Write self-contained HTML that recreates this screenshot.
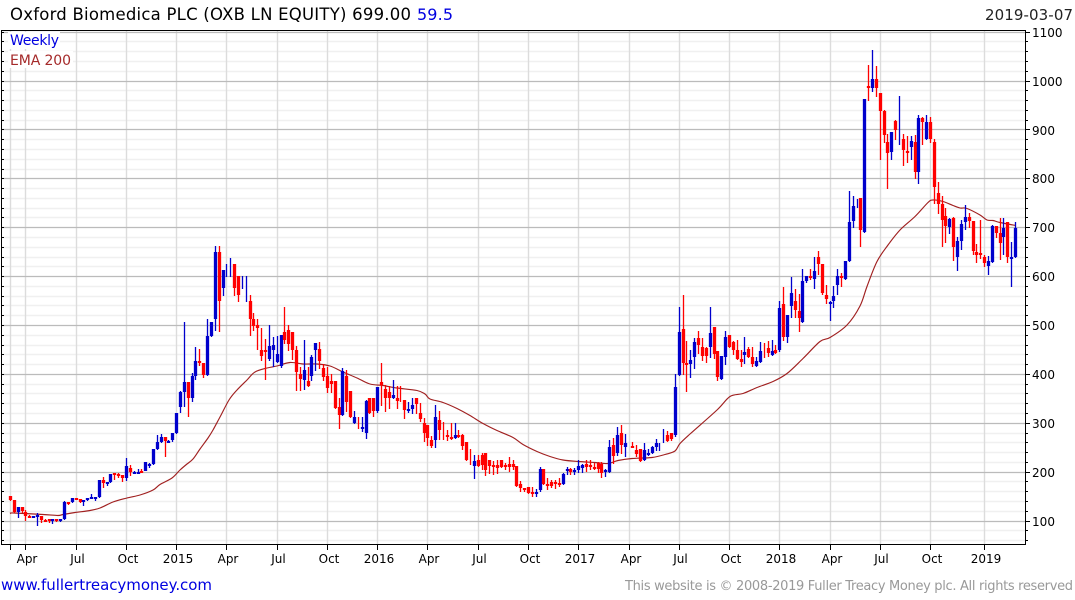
<!DOCTYPE html>
<html><head><meta charset="utf-8"><title>Oxford Biomedica PLC</title>
<style>
html,body{margin:0;padding:0;background:#fff;width:1075px;height:600px;overflow:hidden}
svg{display:block}
text{font-family:"DejaVu Sans","Liberation Sans",sans-serif}
</style></head><body>
<svg id="c" xmlns="http://www.w3.org/2000/svg" width="1075" height="600" viewBox="0 0 1075 600">
<g id="grid"></g>
<rect x="8" y="32" width="52" height="17" fill="#fff"/>
<rect x="8" y="51" width="65" height="17" fill="#fff"/>
<g id="ema"></g>
<g id="bars"></g>
<g id="frame" shape-rendering="crispEdges"></g>
<text x="10" y="20" font-size="16.5" fill="#000" textLength="401" lengthAdjust="spacing">Oxford Biomedica PLC (OXB LN EQUITY) 699.00</text>
<text x="417" y="20" font-size="16" fill="#0000e0" textLength="36" lengthAdjust="spacing">59.5</text>
<text x="985" y="20" font-size="15" fill="#222" textLength="88" lengthAdjust="spacing">2019-03-07</text>
<text x="10" y="45" font-size="14" fill="#0000e0" textLength="49" lengthAdjust="spacing">Weekly</text>
<text x="10" y="65" font-size="14" fill="#a52a2a" textLength="61" lengthAdjust="spacing">EMA 200</text>
<g font-size="12" fill="#000">
<text x="1032" y="37" textLength="30.5">1100</text><text x="1032" y="86" textLength="30.5">1000</text>
<text x="1032" y="135" textLength="23">900</text><text x="1032" y="183" textLength="23">800</text>
<text x="1032" y="232" textLength="23">700</text><text x="1032" y="281" textLength="23">600</text>
<text x="1032" y="330" textLength="23">500</text><text x="1032" y="379" textLength="23">400</text>
<text x="1032" y="428" textLength="23">300</text><text x="1032" y="477" textLength="23">200</text>
<text x="1032" y="526" textLength="23">100</text>
</g>
<g font-size="12" fill="#000" text-anchor="middle">
<text x="27" y="563">Apr</text><text x="77.5" y="563">Jul</text><text x="128" y="563">Oct</text><text x="178" y="563">2015</text>
<text x="228" y="563">Apr</text><text x="278.5" y="563">Jul</text><text x="329" y="563">Oct</text><text x="379" y="563">2016</text>
<text x="429" y="563">Apr</text><text x="479.5" y="563">Jul</text><text x="530" y="563">Oct</text><text x="580" y="563">2017</text>
<text x="631" y="563">Apr</text><text x="680.5" y="563">Jul</text><text x="731" y="563">Oct</text><text x="781" y="563">2018</text>
<text x="832" y="563">Apr</text><text x="881.5" y="563">Jul</text><text x="932" y="563">Oct</text><text x="986" y="563">2019</text>
</g>
<text x="1" y="590" font-size="15" fill="#0000e0" textLength="211" lengthAdjust="spacing">www.fullertreacymoney.com</text>
<text x="625" y="590" font-size="13" fill="#999" textLength="448" lengthAdjust="spacing">This website is © 2008-2019 Fuller Treacy Money plc. All rights reserved</text>
</svg>
<script>
(function(){
var NS="http://www.w3.org/2000/svg";
function el(p,n,a){var e=document.createElementNS(NS,n);for(var k in a)e.setAttribute(k,a[k]);document.getElementById(p).appendChild(e);return e}
function Y(v){return Math.floor(32.2+(1100-v)*.4889)+.5}
var v,y,h="",H="",t="";
for(v=60;v<=1100;v+=20){y=Y(v);var maj=v%100==0;
 if(maj){H+="M2 "+y+"H1025"}else{h+="M2 "+y+"H1025"}
 t+="M2 "+y+"H4M1026 "+y+"H"+(maj?1030:1028);}
var vs=[10,25,76,126,176,226,277,327,377,427,478,528,578,629,679,729,779,830,880,930,984],V="",B="";
vs.forEach(function(x){V+="M"+(x+.5)+" 31V544";B+="M"+(x+.5)+" 545V550"});
el("grid","path",{d:h,stroke:"#f0f0f0","stroke-width":1.4,fill:"none"});
el("grid","path",{d:V,stroke:"#dcdcdc","stroke-width":1.4,fill:"none"});
el("grid","path",{d:H,stroke:"#bbb","stroke-width":1.2,fill:"none"});
el("frame","path",{d:"M1.5 30.5H1025.5V544.5H1.5Z"+t+B,stroke:"#000","stroke-width":1,fill:"none"});
var E="10,513.5 14,513 43,514.5 58,515.5 63,514.5 75,512.5 90,510.5 100,508 113,502 127,498 140,495 153,490 160,484.5 172,478 180,470 187,464 193,459 200,449 208,438 213,430 220,417 229,400 237,390 247,380 255,372 267,368 277,366 290,362.5 303,364 317,364 330,366 343,372 357,378 370,384 383,385.5 397,388 417,390.5 425,394 430,399 443,402.5 457,408.5 470,415.5 483,423.5 497,430.5 513,437.5 523,444.5 537,451.5 550,456.5 563,460 578,461.5 595,462.5 608,463.5 618,460.5 632,458.5 652,457.5 665,454.5 675,451 680,443.5 690,434 717,410 730,396.5 743,393.5 757,387.5 773,381.5 787,373.5 803,358.5 820,341.5 830,337.5 847,325 860,306 867,286.5 877,261.5 888,245 900,230 915,216.5 928,202.5 933,200 943,201.5 953,205.5 960,208 967,208.5 980,215 987,220 993,220.5 1000,222.5 1016,225.5";
var P=E.split(" ").map(function(s){return s.split(",").map(Number)}),d="M"+P[0][0]+" "+P[0][1];
for(var i=0;i<P.length-1;i++){var a=P[Math.max(i-1,0)],b=P[i],c=P[i+1],e=P[Math.min(i+2,P.length-1)];
 d+="C"+(b[0]+(c[0]-a[0])/6).toFixed(1)+" "+(b[1]+(c[1]-a[1])/6).toFixed(1)+" "+(c[0]-(e[0]-b[0])/6).toFixed(1)+" "+(c[1]-(e[1]-b[1])/6).toFixed(1)+" "+c[0]+" "+c[1];}
el("ema","path",{d:d,fill:"none",stroke:"#a02020","stroke-width":1.15});
function D(xo,yo,s){s.trim().split(/\s*;\s*/).forEach(function(c){if(!c)return;
 var p=c.trim().split(/\s+/),px=Math.floor(xo+(+p[0])/3),col=p[1]=="r"?"#ff0000":"#0000cc";
 var hi=yo+p[2]/3,tp=yo+p[3]/3,bt=yo+p[4]/3,lo=yo+p[5]/3,nob=p[3]==p[4];
 hi=Math.round(hi);lo=Math.round(lo);tp=Math.round(tp);bt=Math.round(bt);if(bt<tp+2)bt=tp+2;
 el("bars","rect",{x:px-.15,y:hi,width:1.3,height:Math.max(1,lo-hi),fill:col});
 if(!nob)el("bars","rect",{x:px-1.15,y:tp,width:3.3,height:bt-tp,fill:col});
});}
D(0,400,"31 r 288 289 300 302;43 r 300 300 337 340;55 b 321 321 337 354;67 r 321 321 334 338;76 r 330 335 347 362;88 r 345 347 349 354;100 b 347 349 350 354;112 b 340 345 346 378;124 r 348 348 360 368;136 r 356 360 362 366;148 r 357 358 360 369;157 b 358 358 360 372;169 r 358 358 360 366;181 b 356 358 360 366;193 b 304 305 358 360;205 r 306 306 312 314;217 b 295 295 306 309;229 r 294 294 297 299;241 r 297 298 306 310;250 b 300 300 304 318;262 b 295 295 300 302;274 b 282 291 294 296;286 b 291 292 293 303;298 b 240 241 291 294;310 r 232 240 248 263;322 b 246 246 248 258;331 b 222 222 246 248;343 r 219 220 224 240;355 r 220 223 225 233;367 r 226 226 233 246;379 b 174 198 233 243;391 r 196 205 216 228;403 b 214 215 216 218;415 b 207 215 216 218;424 r 207 214 216 218;436 b 186 186 212 214;448 b 188 191 192 203;460 b 148 148 191 194;472 b 105 127 148 150;484 b 103 111 127 128;496 r 111 111 122 171;505 b 119 122 123 125;517 b 100 100 121 126;529 b 39 39 99 101");
D(150,230,"91 b 484 486 530 549;103 b 276 456 486 531;115 r 456 456 504 561;127 b 430 438 504 516;136 b 351 393 437 450;148 r 357 393 399 408;160 r 399 399 435 444;172 b 267 318 435 438;184 b 276 276 318 321;196 b 48 66 267 303;208 r 48 66 213 306;220 b 120 120 174 198;229 b 102 140 140 141;241 b 84 140 140 141;253 r 102 102 174 198;265 r 138 138 195 216;277 b 138 140 140 177;289 b 138 140 140 216;301 r 195 213 267 318;310 r 249 267 288 303;322 r 267 285 294 360;334 r 294 360 378 393;346 r 327 360 366 450;358 b 285 348 387 393;370 b 321 345 360 411;382 b 318 372 396 399;394 b 315 315 408 414;403 r 231 306 330 342;415 r 285 300 342 363;427 r 306 306 360 390;439 r 348 360 426 483;451 r 411 432 447 483;463 b 330 420 450 480;475 r 411 453 468 471;484 b 375 381 438 453;496 b 339 339 360 423;508 r 336 357 393 417;520 r 402 414 441 453;532 r 411 438 474 489");
D(330,350,"3 r 72 93 102 129;16 r 93 93 174 177;28 r 144 171 196 237;37 b 54 63 195 198;49 r 60 78 156 186;61 r 123 123 201 204;73 b 183 201 219 222;85 r 201 220 220 237;97 b 201 231 237 246;109 b 150 153 249 267;118 r 144 144 189 192;130 r 144 144 183 201;142 b 111 111 183 189;154 r 39 96 105 168;166 r 105 117 144 186;178 r 108 126 144 177;190 b 90 135 144 147;202 r 108 144 153 177;211 r 108 150 150 156;223 r 150 150 180 207;235 b 156 177 180 189;247 b 144 165 177 192;259 r 144 144 162 192;271 r 159 189 207 216;283 r 204 219 249 276;292 r 225 225 264 288;304 r 258 270 288 294;316 b 165 201 270 294;328 r 183 210 240 270;340 r 216 255 255 270;352 r 240 255 258 273;364 r 219 261 267 270;376 b 219 255 264 267;385 r 240 255 258 264;397 r 252 255 288 300;409 r 276 276 330 333;421 r 297 333 333 345;433 b 315 333 348 387;445 r 315 330 348 350;457 r 309 315 345 360;466 r 309 309 360 378;478 r 330 330 348 372;490 r 333 345 351 375;502 r 330 345 354 372;514 r 330 330 351 354;526 r 340 345 348 360;538 r 321 342 351 366;550 r 330 342 351 360;559 r 348 348 408 411;571 r 393 402 414 426;583 r 414 414 417 426;595 r 411 411 429 432;607 r 411 426 429 441;619 b 417 426 432 441;631 b 351 357 420 426;640 r 357 357 402 405;652 r 384 402 408 420;664 r 390 396 408 414;676 r 390 396 399 417;688 r 384 399 405 411;700 b 368 372 402 405");
D(565,400,"7 b 200 208 212 225;16 r 203 208 216 225;28 b 205 210 212 225;40 b 181 198 210 219;52 b 192 195 204 219;64 r 180 192 201 216;76 r 180 195 201 210;88 r 189 201 204 210;100 r 186 189 207 219;109 r 186 192 219 234;121 b 207 210 216 231;133 b 120 141 216 219;145 r 114 135 168 192;157 b 81 105 159 168;169 r 75 99 135 162;181 b 102 129 141 171;202 r 126 138 141 144;214 r 135 150 162 171;226 r 147 147 183 186;238 b 129 150 180 183;250 b 147 159 165 168;262 b 138 141 159 162;274 b 117 129 141 153;283 b 129 140 140 153;295 b 87 100 100 129;307 r 93 105 123 126;319 r 99 99 117 123");
D(660,270,"46 b 312 351 495 501;58 b 111 186 315 318;70 r 75 177 279 315;79 r 213 278 280 366;91 b 240 270 282 324;103 b 204 216 261 297;115 r 183 204 225 252;127 r 204 231 258 273;139 r 231 234 258 279;151 b 111 189 231 264;163 r 171 171 252 267;172 r 243 243 321 333;184 b 258 258 327 330;196 b 183 201 261 285;208 r 195 195 231 234;220 r 213 216 240 255;232 r 210 240 267 270;244 r 240 267 276 291;253 b 201 246 255 282;265 r 231 237 261 264;277 r 231 261 282 291;289 b 261 273 288 291;301 b 216 243 276 279;313 r 218 240 240 264;325 r 213 234 249 261;337 b 210 243 255 258;346 r 225 240 249 252");
D(760,230,"58 b 213 234 360 365;70 r 171 222 321 333;82 b 255 255 321 339;94 b 141 189 228 264;106 r 177 213 240 264;118 r 192 243 264 306;127 b 117 153 276 279;139 b 138 138 153 159;151 r 117 138 144 150;163 b 81 123 147 177;175 r 63 81 102 135;187 r 102 102 189 195;199 r 165 195 207 222;211 b 213 216 218 273;220 b 168 198 213 234;232 b 117 138 165 195;244 r 129 138 144 171;256 b 93 93 147 150");
D(800,170,"148 b 63 156 273 276;160 b 78 108 153 174;172 b 87 100 100 114;181 r 84 84 180 231;193 b -213 -213 186 189");
D(800,0,"205 r 195 258 263 303;217 b 150 237 263 276;229 r 198 237 263 291;241 r 279 279 333 480;253 r 330 333 405 429;262 r 402 426 459 567;274 b 396 396 456 480;286 r 360 363 390 420;298 b 288 300 300 435;310 r 402 417 450 498;322 r 408 453 459 489;334 b 408 423 441 480;346 r 405 426 516 537;355 b 345 354 516 552;367 r 351 354 366 435;379 b 345 366 417 420;391 r 351 366 417 429;403 r 417 426 561 612");
D(800,170,"415 r 36 69 102 132;427 r 78 102 150 231;436 r 114 138 168 219;448 b 144 147 171 192;460 r 141 144 231 273;472 b 201 213 261 303;484 b 150 162 213 240;496 b 105 141 156 180;508 r 129 141 153 174;520 r 153 153 243 255;529 r 222 246 255 279;541 r 150 249 252 267;553 r 255 261 279 291;565 b 258 273 288 315;577 b 165 168 276 279;589 r 168 168 189 204;601 r 144 189 219 270;610 b 144 174 201 255;622 r 156 156 261 279;634 b 216 261 262 351;646 b 156 174 261 264");
})();
</script>
</body></html>
